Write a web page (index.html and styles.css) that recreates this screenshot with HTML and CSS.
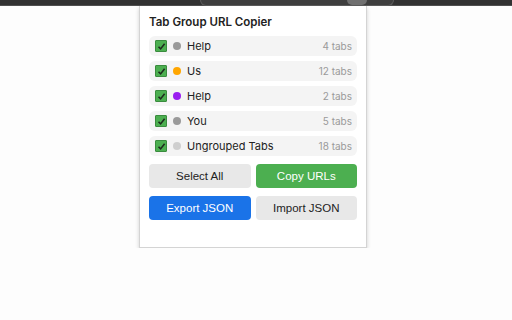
FILE: index.html
```html
<!DOCTYPE html>
<html>
<head>
    <meta charset="utf-8">
    <title>Tab Group URL Copier</title>
    <link rel="stylesheet" href="styles.css">
</head>
<body>
<div class="toolbar">
    <div class="omnibox"><span class="omnibox-icon"></span></div>
</div>
<div id="popup">
    <h1 class="title">Tab Group URL Copier</h1>
    <div class="groups">
        <div class="group">
            <span class="check"><svg width="9" height="9" viewBox="0 0 9 9"><path d="M1.5 4.8 L3.6 6.9 L7.6 1.8" fill="none" stroke="#1d2b1d" stroke-width="1.6"/></svg></span>
            <span class="dot grey"></span>
            <span class="name">Help</span>
            <span class="count">4 tabs</span>
        </div>
        <div class="group">
            <span class="check"><svg width="9" height="9" viewBox="0 0 9 9"><path d="M1.5 4.8 L3.6 6.9 L7.6 1.8" fill="none" stroke="#1d2b1d" stroke-width="1.6"/></svg></span>
            <span class="dot orange"></span>
            <span class="name">Us</span>
            <span class="count">12 tabs</span>
        </div>
        <div class="group">
            <span class="check"><svg width="9" height="9" viewBox="0 0 9 9"><path d="M1.5 4.8 L3.6 6.9 L7.6 1.8" fill="none" stroke="#1d2b1d" stroke-width="1.6"/></svg></span>
            <span class="dot purple"></span>
            <span class="name">Help</span>
            <span class="count">2 tabs</span>
        </div>
        <div class="group">
            <span class="check"><svg width="9" height="9" viewBox="0 0 9 9"><path d="M1.5 4.8 L3.6 6.9 L7.6 1.8" fill="none" stroke="#1d2b1d" stroke-width="1.6"/></svg></span>
            <span class="dot grey"></span>
            <span class="name">You</span>
            <span class="count">5 tabs</span>
        </div>
        <div class="group">
            <span class="check"><svg width="9" height="9" viewBox="0 0 9 9"><path d="M1.5 4.8 L3.6 6.9 L7.6 1.8" fill="none" stroke="#1d2b1d" stroke-width="1.6"/></svg></span>
            <span class="dot light"></span>
            <span class="name">Ungrouped Tabs</span>
            <span class="count">18 tabs</span>
        </div>
    </div>
    <div class="buttons">
        <button class="btn plain">Select All</button>
        <button class="btn green">Copy URLs</button>
        <button class="btn blue">Export JSON</button>
        <button class="btn plain">Import JSON</button>
    </div>
</div>
</body>
</html>
```

FILE: styles.css
```css
body {
    margin: 0;
    background: #fdfdfd;
    font-family: Inter, "Noto Sans", sans-serif;
}
.toolbar {
    height: 5px;
    background: #323232;
    border-bottom: 1px solid #4f4f4f;
    display: flex;
}
.omnibox {
    margin-left: 200px;
    width: 192px;
    height: 5px;
    background: #3e3e3e;
    border-radius: 0 0 12px 12px;
    border: 1px solid #5a5a5a;
    border-top: none;
    display: flex;
    justify-content: flex-end;
}
.omnibox-icon {
    width: 20px;
    height: 5px;
    margin-right: 26px;
    background: #707070;
    border-radius: 0 0 10px 10px;
}
#popup {
    margin-left: 139px;
    width: 208px;
    padding: 9px 9px 27px;
    background: #fff;
    border: 1px solid #d4d4d4;
    border-top: none;
    box-shadow: 0 2px 4px rgba(0, 0, 0, 0.18);
}
.title {
    margin: 0 0 7px;
    font-size: 11.5px;
    font-weight: 600;
    line-height: 14px;
    color: #222;
}
.groups {
    display: flex;
    flex-direction: column;
    gap: 5px;
}
.group {
    display: flex;
    align-items: center;
    height: 20px;
    padding: 0 5px 0 6px;
    background: #f4f4f4;
    border-radius: 6px;
    font-size: 11px;
}
.check {
    width: 10px;
    height: 10px;
    background: #4caf50;
    border: 1px solid #3a8c3e;
    border-radius: 1px;
    display: flex;
    align-items: center;
    justify-content: center;
}
.dot {
    width: 8px;
    height: 8px;
    border-radius: 50%;
    margin: 0 6px 0 6px;
}
.grey { background: #9a9a9a; }
.orange { background: #ffa600; }
.purple { background: #9a1ef0; }
.light { background: #cfcfcf; }
.name {
    flex: 1;
    color: #222;
    font-weight: 400;
}
.count {
    color: #9a9a9a;
    font-size: 10px;
}
.buttons {
    display: grid;
    grid-template-columns: 1fr 1fr;
    column-gap: 5px;
    row-gap: 8px;
    margin-top: 8px;
}
.btn {
    height: 24px;
    border: none;
    border-radius: 4px;
    font-family: "Liberation Sans", Arial, sans-serif;
    font-size: 11.5px;
    padding: 0;
}
.plain {
    background: #e8e8e8;
    color: #222;
}
.green {
    background: #4caf50;
    color: #fff;
}
.blue {
    background: #1a73e8;
    color: #fff;
}
```
